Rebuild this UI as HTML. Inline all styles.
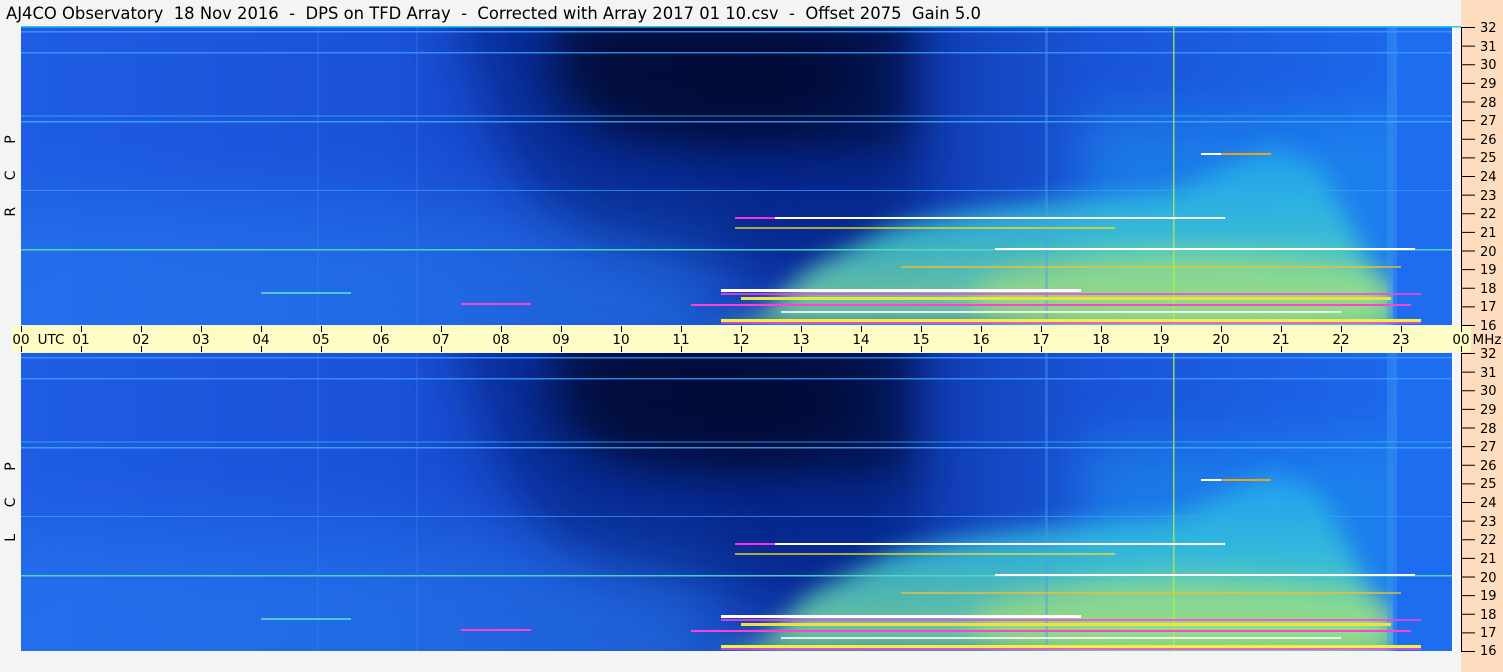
<!DOCTYPE html>
<html><head><meta charset="utf-8">
<style>
html,body{margin:0;padding:0;background:#f4f4f4;width:1503px;height:672px;overflow:hidden;}
body{position:relative;font-family:"DejaVu Sans","Liberation Sans",sans-serif;}
svg{position:absolute;left:0;top:0;display:block;}
</style></head><body>
<svg width="1503" height="672" viewBox="0 0 1503 672" xmlns="http://www.w3.org/2000/svg" font-family="DejaVu Sans, Liberation Sans, sans-serif" overflow="hidden">
<defs>
  <linearGradient id="base" x1="0" x2="1" y1="0" y2="0">
    <stop offset="0" stop-color="#1f5ce4"/>
    <stop offset="0.25" stop-color="#1a52d8"/>
    <stop offset="0.36" stop-color="#1646c8"/>
    <stop offset="0.5" stop-color="#1038b0"/>
    <stop offset="0.64" stop-color="#1240b8"/>
    <stop offset="0.75" stop-color="#1a54d8"/>
    <stop offset="1" stop-color="#1e6cf0"/>
  </linearGradient>
  <linearGradient id="green" x1="0" x2="0" y1="0" y2="1">
    <stop offset="0" stop-color="#22a8f0"/>
    <stop offset="0.45" stop-color="#38c8d8"/>
    <stop offset="1" stop-color="#98ec88"/>
  </linearGradient>
  <filter id="b12" filterUnits="userSpaceOnUse" x="-200" y="-200" width="1900" height="700"><feGaussianBlur stdDeviation="12"/></filter>
  <filter id="b20" filterUnits="userSpaceOnUse" x="-200" y="-200" width="1900" height="700"><feGaussianBlur stdDeviation="22"/></filter>
  <filter id="b25" filterUnits="userSpaceOnUse" x="-200" y="-200" width="1900" height="700"><feGaussianBlur stdDeviation="25"/></filter>
  <filter id="b40" filterUnits="userSpaceOnUse" x="-200" y="-200" width="1900" height="700"><feGaussianBlur stdDeviation="40"/></filter>
  <clipPath id="pc"><rect x="0" y="0" width="1432" height="298"/></clipPath>
  <g id="panel">
    <g clip-path="url(#pc)">
    <rect x="0" y="0" width="1440" height="298" fill="url(#base)"/>
    <rect x="-50" y="180" width="760" height="200" fill="#2a88f6" opacity="0.45" filter="url(#b40)"/>
    <path d="M430,-40 L900,-40 L900,270 C800,250 650,230 560,200 C500,170 470,120 430,-40 Z" fill="#061c78" opacity="0.6" filter="url(#b25)"/>
    <path d="M530,-40 L890,-40 L890,120 C800,130 650,120 580,100 C550,60 535,20 530,-40 Z" fill="#000018" opacity="0.5" filter="url(#b20)"/>
    <ellipse cx="680" cy="50" rx="160" ry="60" fill="#000010" opacity="0.35" filter="url(#b20)"/>
    <rect x="1060" y="90" width="330" height="230" fill="#1f9af2" opacity="0.5" filter="url(#b25)"/>
    <path d="M690,300 L740,288 L790,240 L870,200 C950,180 1050,170 1150,165 L1250,120 L1300,140 L1380,300 Z" fill="url(#green)" opacity="0.8" filter="url(#b12)"/>
    <ellipse cx="1170" cy="270" rx="220" ry="45" fill="#c0ec60" opacity="0.45" filter="url(#b12)"/>
    <rect x="1372" y="0" width="68" height="298" fill="#1e6cf0"/>
    <rect x="1366" y="0" width="10" height="298" fill="#3a9af0" opacity="0.45"/>
    <rect x="0" y="4" width="1440" height="1.5" fill="#3aa0ff" opacity="0.8"/>
    <rect x="0" y="25" width="1440" height="1.5" fill="#3aa0ff" opacity="0.8"/>
    <rect x="0" y="94" width="1440" height="1.5" fill="#40b0ff" opacity="0.8"/>
    <rect x="0" y="163" width="1440" height="1" fill="#3aa0ff" opacity="0.7"/>
    <rect x="0" y="222" width="1440" height="1.5" fill="#50e0c0" opacity="0.9"/>
    <rect x="1152" y="0" width="1.5" height="298" fill="#b0f040" opacity="0.8"/>
    <rect x="1024" y="0" width="3" height="298" fill="#40a0f0" opacity="0.4"/>
    <rect x="296" y="0" width="2" height="298" fill="#4080f0" opacity="0.3"/>
    <rect x="395" y="0" width="2" height="298" fill="#4080f0" opacity="0.3"/>
    <rect x="0" y="88" width="1440" height="2" fill="#40c0f0" opacity="0.35"/>
    <rect x="714" y="190" width="490" height="2" fill="#ffffff"/>
    <rect x="714" y="190" width="40" height="2" fill="#ff30e0"/>
    <rect x="974" y="221" width="420" height="2" fill="#ffffff"/>
    <rect x="714" y="200" width="380" height="2" fill="#f0e020" opacity="0.7"/>
    <rect x="1180" y="126" width="40" height="2" fill="#ffffff"/>
    <rect x="1200" y="126" width="50" height="2" fill="#f0a020"/>
    <rect x="880" y="239" width="500" height="2" fill="#f0c030" opacity="0.7"/>
    <rect x="700" y="262" width="360" height="3" fill="#ffffff"/>
    <rect x="700" y="266" width="700" height="2" fill="#ff40e0" opacity="0.8"/>
    <rect x="720" y="270" width="650" height="3" fill="#f0e040"/>
    <rect x="670" y="277" width="720" height="2" fill="#ff40d0"/>
    <rect x="440" y="276" width="70" height="2" fill="#ff40d0"/>
    <rect x="760" y="284" width="560" height="2" fill="#ffffff" opacity="0.8"/>
    <rect x="700" y="292" width="700" height="3" fill="#f0f040"/>
    <rect x="700" y="295" width="700" height="2" fill="#ff40e0" opacity="0.7"/>
    <rect x="240" y="265" width="90" height="2" fill="#60f0e0" opacity="0.7"/>
    </g>
    <rect x="1431" y="0" width="1.5" height="298" fill="#ffffff"/>
  </g>
</defs>

<text x="6" y="19" font-size="16.4" fill="#000" xml:space="preserve">AJ4CO Observatory  18 Nov 2016  -  DPS on TFD Array  -  Corrected with Array 2017 01 10.csv  -  Offset 2075  Gain 5.0</text>

<rect x="1461" y="0" width="42" height="672" fill="#fddcc0"/>

<use href="#panel" x="21" y="27"/>
<use href="#panel" x="21" y="353"/>
<rect x="21" y="26" width="1440" height="1.5" fill="#30c0f0"/>

<text transform="translate(15,176) rotate(-90)" font-size="14" text-anchor="middle" fill="#000" xml:space="preserve">R      C      P</text>
<text transform="translate(15,502) rotate(-90)" font-size="14" text-anchor="middle" fill="#000" xml:space="preserve">L      C      P</text>

<rect x="1461" y="27" width="1" height="298" fill="#000"/>
<rect x="1461" y="353" width="1" height="298" fill="#000"/>

<rect x="12" y="326" width="1459" height="26" fill="#fdfcc4"/>
<g stroke="#000" stroke-width="1">
  <path d="M21.5,326v6M81.5,326v6M141.5,326v6M201.5,326v6M261.5,326v6M321.5,326v6M381.5,326v6M441.5,326v6M501.5,326v6M561.5,326v6M621.5,326v6M681.5,326v6M741.5,326v6M801.5,326v6M861.5,326v6M921.5,326v6M981.5,326v6M1041.5,326v6M1101.5,326v6M1161.5,326v6M1221.5,326v6M1281.5,326v6M1341.5,326v6M1401.5,326v6M1461.5,326v6"/>
  <path d="M21.5,346v6M81.5,346v6M141.5,346v6M201.5,346v6M261.5,346v6M321.5,346v6M381.5,346v6M441.5,346v6M501.5,346v6M561.5,346v6M621.5,346v6M681.5,346v6M741.5,346v6M801.5,346v6M861.5,346v6M921.5,346v6M981.5,346v6M1041.5,346v6M1101.5,346v6M1161.5,346v6M1221.5,346v6M1281.5,346v6M1341.5,346v6M1401.5,346v6M1461.5,346v6"/>
</g>
<g font-size="13.5" fill="#000" text-anchor="middle">
  <text x="21" y="344">00</text><text x="51" y="344">UTC</text>
  <text x="81" y="344">01</text><text x="141" y="344">02</text><text x="201" y="344">03</text>
  <text x="261" y="344">04</text><text x="321" y="344">05</text><text x="381" y="344">06</text>
  <text x="441" y="344">07</text><text x="501" y="344">08</text><text x="561" y="344">09</text>
  <text x="621" y="344">10</text><text x="681" y="344">11</text><text x="741" y="344">12</text>
  <text x="801" y="344">13</text><text x="861" y="344">14</text><text x="921" y="344">15</text>
  <text x="981" y="344">16</text><text x="1041" y="344">17</text><text x="1101" y="344">18</text>
  <text x="1161" y="344">19</text><text x="1221" y="344">20</text><text x="1281" y="344">21</text>
  <text x="1341" y="344">22</text><text x="1401" y="344">23</text><text x="1461" y="344">00</text>
  <text x="1487" y="344">MHz</text>
</g>

<g stroke="#000" stroke-width="1">
<path d="M1461,27.5h14M1461,46.1h14M1461,64.8h14M1461,83.4h14M1461,102h14M1461,120.6h14M1461,139.3h14M1461,157.9h14M1461,176.5h14M1461,195.1h14M1461,213.8h14M1461,232.4h14M1461,251h14M1461,269.6h14M1461,288.3h14M1461,306.9h14M1461,325.5h14"/>
<path d="M1461,353.5h14M1461,372.1h14M1461,390.8h14M1461,409.4h14M1461,428h14M1461,446.6h14M1461,465.3h14M1461,483.9h14M1461,502.5h14M1461,521.1h14M1461,539.8h14M1461,558.4h14M1461,577h14M1461,595.6h14M1461,614.3h14M1461,632.9h14M1461,651.5h14"/>
</g>
<g font-size="13" fill="#000">
<text x="1480" y="32">32</text><text x="1480" y="51">31</text><text x="1480" y="69">30</text>
<text x="1480" y="88">29</text><text x="1480" y="107">28</text><text x="1480" y="125">27</text>
<text x="1480" y="144">26</text><text x="1480" y="162">25</text><text x="1480" y="181">24</text>
<text x="1480" y="200">23</text><text x="1480" y="218">22</text><text x="1480" y="237">21</text>
<text x="1480" y="256">20</text><text x="1480" y="274">19</text><text x="1480" y="293">18</text>
<text x="1480" y="311">17</text><text x="1480" y="330">16</text>
<text x="1480" y="358">32</text><text x="1480" y="377">31</text><text x="1480" y="395">30</text>
<text x="1480" y="414">29</text><text x="1480" y="433">28</text><text x="1480" y="451">27</text>
<text x="1480" y="470">26</text><text x="1480" y="488">25</text><text x="1480" y="507">24</text>
<text x="1480" y="526">23</text><text x="1480" y="544">22</text><text x="1480" y="563">21</text>
<text x="1480" y="582">20</text><text x="1480" y="600">19</text><text x="1480" y="619">18</text>
<text x="1480" y="637">17</text><text x="1480" y="655">16</text>
</g>
</svg>
</body></html>
